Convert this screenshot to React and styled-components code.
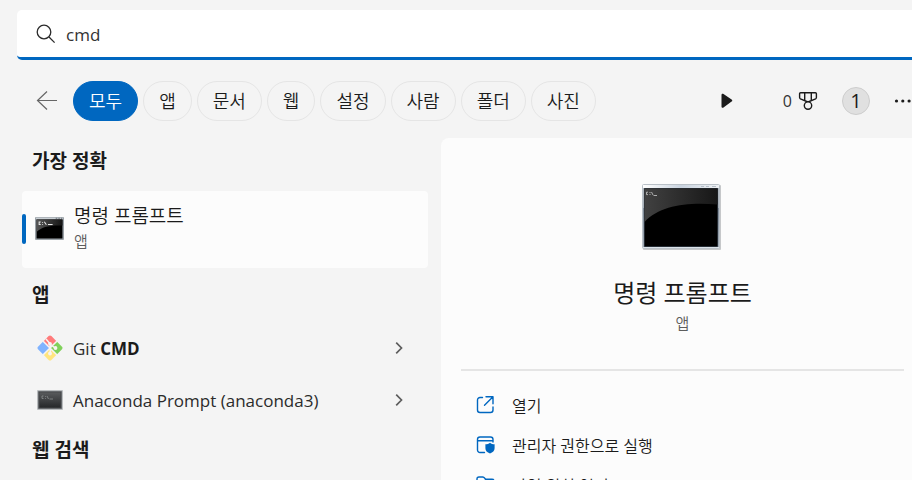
import React from 'react';
import styled, { createGlobalStyle } from 'styled-components';

const GlobalStyle = createGlobalStyle`
  * {
    box-sizing: border-box;
  }

  body {
    margin: 0;
    color: #1b1b1b;
    background: #f4f4f4;
    font-family: 'Open Sans', 'Noto Sans CJK KR', sans-serif;
  }

  button,
  input {
    margin: 0;
    padding: 0;
    border: 0;
    color: inherit;
    background: none;
    font-family: inherit;
  }

  h1,
  h2,
  ul {
    margin: 0;
    padding: 0;
    list-style: none;
  }

  svg {
    display: block;
    flex: none;
  }
`;

const Window = styled.main`
  height: 100vh;
  display: flex;
  flex-direction: column;
  overflow: hidden;
  padding-top: 10px;
`;

const SearchBox = styled.label`
  height: 50px;
  flex: none;
  display: flex;
  align-items: center;
  gap: 10px;
  margin-left: 17px;
  padding-left: 19px;
  border-bottom: 3px solid #0067c0;
  border-radius: 5px 0 0 5px;
  background: #fff;
`;

const SearchInput = styled.input`
  flex: 1;
  min-width: 0;
  height: 100%;
  padding-top: 2px;
  color: #333;
  font-size: 17px;
  outline: 0;
`;

const Toolbar = styled.div`
  height: 78px;
  flex: none;
  display: flex;
  align-items: center;
  padding: 4px 0 0 36px;
`;

const IconButton = styled.button`
  display: flex;
  align-items: center;
  cursor: pointer;
`;

const Tabs = styled.nav`
  display: flex;
  gap: 5px;
  margin-left: 15px;
`;

const Tab = styled.button`
  height: 40px;
  padding: 0 15px 2px;
  border: 1px solid ${(props) => (props.$active ? '#0067c0' : '#e5e5e5')};
  border-radius: 20px;
  color: ${(props) => (props.$active ? '#fff' : '#1b1b1b')};
  background: ${(props) => (props.$active ? '#0067c0' : 'transparent')};
  font-size: 18px;
  font-weight: 350;
  cursor: pointer;
`;

const Tools = styled.div`
  display: flex;
  align-items: center;
  gap: 24px;
  margin-left: auto;
`;

const PlayButton = styled(IconButton)`
  margin-right: 25px;
`;

const Rewards = styled(IconButton)`
  gap: 6px;
  color: #333;
  font-size: 16px;
`;

const Avatar = styled.button`
  width: 28px;
  height: 28px;
  border: 1px solid #cdcdcd;
  border-radius: 50%;
  background: #e0e0e0;
  font-size: 20px;
  line-height: 24px;
`;

const Content = styled.div`
  flex: 1;
  min-height: 0;
  display: flex;
`;

const Results = styled.section`
  width: 441px;
  flex: none;
  padding: 8px 13px 0 22px;
`;

const GroupTitle = styled.h2`
  padding-left: 10px;
  font-size: 19px;
  font-weight: 700;
  line-height: 30px;
`;

const BestMatch = styled.button`
  width: 100%;
  height: 77px;
  display: flex;
  align-items: center;
  margin: 15px 0 12px;
  padding-bottom: 2px;
  border-radius: 4px;
  background: #fcfcfc;
  text-align: left;
  cursor: pointer;
`;

const Marker = styled.span`
  width: 4px;
  height: 30px;
  margin-right: 9px;
  border-radius: 2px;
  background: #0067c0;
`;

const BestText = styled.span`
  display: flex;
  flex-direction: column;
  margin-left: 10px;
  padding-bottom: 2px;
`;

const Name = styled.span`
  font-size: 19px;
  font-weight: 350;
  line-height: 26px;
`;

const Kind = styled.span`
  color: #5d5d5d;
  font-size: 15px;
  font-weight: 350;
  line-height: 24px;
`;

const AppList = styled.ul`
  padding: 12px 0 9px;
`;

const AppRow = styled.button`
  width: 100%;
  height: 52px;
  display: flex;
  align-items: center;
  gap: 10px;
  padding: 0 25px 0 15px;
  color: #2b2b2b;
  font-size: 17px;
  text-align: left;
  cursor: pointer;
`;

const AppName = styled.span`
  flex: 1;

  b {
    color: #1b1b1b;
    font-weight: 700;
  }
`;

const Details = styled.section`
  flex: 1;
  min-width: 0;
  padding: 46px 8px 0 20px;
  border-radius: 8px 0 0 0;
  background: #fcfcfc;
`;

const Hero = styled.header`
  display: flex;
  flex-direction: column;
  align-items: center;
  padding-bottom: 34px;
  border-bottom: 2px solid #e5e5e5;
`;

const HeroTitle = styled.h1`
  margin-top: 23px;
  font-size: 24px;
  font-weight: 400;
  line-height: 36px;
`;

const Actions = styled.ul`
  padding-top: 14px;
`;

const Action = styled.button`
  width: 100%;
  height: 40px;
  display: flex;
  align-items: center;
  gap: 16px;
  padding-left: 15px;
  color: #1b1b1b;
  font-size: 16px;
  font-weight: 350;
  cursor: pointer;
`;

function SearchIcon() {
  return (
    <svg width="20" height="20" viewBox="0 0 20 20" fill="none" stroke="#2b2b2b" strokeWidth="1.3">
      <circle cx="8" cy="8" r="6.8" />
      <path d="M13 13l5.600 5.600" />
    </svg>
  );
}

function BackIcon() {
  return (
    <svg width="22" height="20" viewBox="0 0 22 20" fill="none" stroke="#666" strokeWidth="1.2">
      <path d="M21 9.500H1.500M11 .5L1.500 9.500l9.500 9" />
    </svg>
  );
}

function PlayIcon() {
  return (
    <svg width="14" height="16" viewBox="0 0 14 16" fill="#1b1b1b">
      <path d="M1.500 2c0-1.200 1-1.700 2-1.100l8.100 5.500c.9.6.9 1.600 0 2.200l-8.100 5.800c-1 .6-2 .2-2-1z" />
    </svg>
  );
}

function MedalIcon() {
  return (
    <svg width="20" height="20" viewBox="0 0 20 20" fill="none" stroke="#1b1b1b" strokeWidth="1.4" strokeLinejoin="round">
      <path d="M2.600 1.700h14.800c.6 0 1 .4 1 1v3.800c0 .6-.3 1-.8 1.300L10 11 2.400 7.800c-.5-.3-.8-.7-.8-1.300V2.700c0-.6.4-1 1-1z" />
      <path d="M6.700 1.700v7.600M13.300 1.700v7.600" />
      <circle cx="10" cy="14.600" r="3.700" fill="#f4f4f4" />
    </svg>
  );
}

function MoreIcon() {
  return (
    <svg width="18" height="6" viewBox="0 0 18 6" fill="#1b1b1b">
      <circle cx="2.500" cy="3" r="1.600" />
      <circle cx="8.800" cy="3" r="1.600" />
      <circle cx="15.100" cy="3" r="1.600" />
    </svg>
  );
}

function ChevronIcon() {
  return (
    <svg width="8" height="12" viewBox="0 0 8 12" fill="none" stroke="#5d5d5d" strokeWidth="1.700">
      <path d="M1.200.7L6.500 6l-5.300 5.300" />
    </svg>
  );
}

function ConsoleSmallIcon() {
  return (
    <svg width="29" height="23" viewBox="0 0 28 23" preserveAspectRatio="none">
      <defs>
        <linearGradient id="smallGloss" x1="0" y1="0" x2="1" y2="0">
          <stop offset="0" stopColor="#555" />
          <stop offset="1" stopColor="#151515" />
        </linearGradient>
      </defs>
      <rect width="28" height="23" rx="1" fill="#9ba2a8" />
      <rect x="1" y=".6" width="26" height="1.600" fill="#c9cfd4" />
      <path d="M20 1.200h1.500M22.500 1.200H24M25 1.200h1.300" stroke="#6d747b" />
      <rect x="1.500" y="2.500" width="25" height="19" fill="#000" />
      <path d="M1.500 2.500h25v6C14 8 6 10 1.500 15z" fill="url(#smallGloss)" />
      <path d="M5.500 5H4v2.500h1.500M7.300 5v.8M7.300 7v.8M9 4.800l2 3M12.500 7.500H17" fill="none" stroke="#e8e8e8" />
    </svg>
  );
}

function ConsoleLargeIcon() {
  return (
    <svg width="81" height="68" viewBox="0 0 81 68">
      <defs>
        <linearGradient id="frame" x1="0" y1="0" x2="0" y2="1">
          <stop offset="0" stopColor="#fafbfc" />
          <stop offset=".36" stopColor="#e5eaef" />
          <stop offset=".37" stopColor="#a3aeba" />
          <stop offset="1" stopColor="#dce3ea" />
        </linearGradient>
        <linearGradient id="titleBar" x1="0" y1="0" x2="1" y2="0">
          <stop offset="0" stopColor="#fff" />
          <stop offset=".5" stopColor="#c9d3df" />
          <stop offset="1" stopColor="#eef1f4" />
        </linearGradient>
        <linearGradient id="gloss" x1="0" y1="0" x2="1" y2="0">
          <stop offset="0" stopColor="#414141" />
          <stop offset="1" stopColor="#171717" />
        </linearGradient>
      </defs>
      <rect x="1" y="1" width="78" height="65" rx="1" fill="#c6c8ca" />
      <rect x=".5" y=".5" width="77" height="64" rx="1" fill="url(#frame)" stroke="#b9c0c7" />
      <rect x="1" y="1" width="76" height="3" fill="url(#titleBar)" />
      <path d="M59 2.500h3M64 2.500h3M70 2.500h4" stroke="#b5bec8" />
      <rect x="1.600" y="4" width="74.800" height="59" fill="#4a5868" />
      <rect x="2.500" y="4.500" width="73" height="58" fill="#000" />
      <path d="M2.500 4.500h73V20.500C46 18 18 21 2.500 38z" fill="url(#gloss)" />
      <path d="M6 8.200H4.500v2.400H6M8 8v1M8 10v1M9.500 8l1.500 3M11.500 11.500H15" fill="none" stroke="#ccc" strokeWidth=".8" />
    </svg>
  );
}

function GitIcon() {
  return (
    <svg width="26" height="26" viewBox="0 0 26 26">
      <path d="M13 .5c.6 0 1 .2 1.400.6l5.100 5.100L13 12.600 6.600 6.200l5-5.100c.4-.4.8-.6 1.400-.6z" fill="#ff7b7b" />
      <path d="M19.800 6.500l5.200 5.300c.7.700.7 1.700 0 2.400l-5.200 5.300L13.400 13z" fill="#80d15b" />
      <path d="M13 13.400l6.500 6.400-5.100 5.100c-.8.8-2 .8-2.800 0l-5-5.100z" fill="#ffe57f" />
      <path d="M6.200 6.500l6.400 6.500-6.400 6.500L1 14.200c-.7-.7-.7-1.700 0-2.400z" fill="#80b3ff" />
      <path d="M6.200 6.200L19.800 19.800M19.800 6.200L6.200 19.800M9 4l4.300 5v9M13 9l5 4" fill="none" stroke="#f7f4f3" strokeWidth="1.500" />
      <circle cx="13" cy="8.800" r="1.900" fill="#f7f4f3" />
      <circle cx="18.500" cy="13" r="1.900" fill="#f7f4f3" />
      <circle cx="13" cy="18.500" r="1.900" fill="#f7f4f3" />
    </svg>
  );
}

function AnacondaIcon() {
  return (
    <svg width="26" height="20" viewBox="0 0 26 20">
      <defs>
        <linearGradient id="screen" x1="0" y1="0" x2="0" y2="1">
          <stop offset="0" stopColor="#5a5c5e" />
          <stop offset="1" stopColor="#242628" />
        </linearGradient>
      </defs>
      <rect width="26" height="20" rx="1" fill="#b9bcbe" />
      <rect x="1" y="1" width="24" height="18" fill="#85898c" />
      <rect x="2" y="2" width="22" height="16" fill="url(#screen)" stroke="#46494b" />
      <path d="M6.500 6H5v2.500h1.500M8.500 6v.8M8.500 8v.8M10 6l1.500 3M12.500 9H16" fill="none" stroke="#8c8f91" strokeWidth=".8" />
    </svg>
  );
}

function OpenIcon() {
  return (
    <svg width="20" height="20" viewBox="0 0 20 20" fill="none" stroke="#0067c0" strokeWidth="1.400" strokeLinecap="round" strokeLinejoin="round">
      <path d="M6.500 2.500H4A2.500 2.500 0 0 0 1.500 5v10A2.500 2.500 0 0 0 4 17.500h10.500A2.500 2.500 0 0 0 17 15v-3" />
      <path d="M10 1.800h7v7M17 1.800L8.500 10.300" />
    </svg>
  );
}

function AdminIcon() {
  return (
    <svg width="20" height="20" viewBox="0 0 20 20" fill="none" stroke="#0067c0" strokeWidth="1.400" strokeLinecap="round">
      <path d="M8.500 17.500H4A2.500 2.500 0 0 1 1.500 15V4.500A2.500 2.500 0 0 1 4 2h10.500A2.500 2.500 0 0 1 17 4.500V7M2 5.700h14.700" />
      <path d="M14 7.700c1.300 1.100 2.800 1.500 4.600 1.600v4c0 2.500-1.800 4.200-4.600 5.200-2.900-1-4.600-2.700-4.600-5.200v-4c1.800-.1 3.300-.5 4.600-1.600z" fill="#0067c0" stroke="none" />
    </svg>
  );
}

function FolderIcon() {
  return (
    <svg width="20" height="20" viewBox="0 0 20 20" fill="none" stroke="#0067c0" strokeWidth="1.400" strokeLinejoin="round">
      <path d="M1 15V4a2 2 0 0 1 2-2h3.600c.5 0 1 .2 1.400.6l1.700 1.700H16a2 2 0 0 1 2 2V15a2 2 0 0 1-2 2H3a2 2 0 0 1-2-2z" />
      <path d="M1 7h5.600c.5 0 1-.2 1.400-.6l2-2" />
    </svg>
  );
}

const tabs = ['모두', '앱', '문서', '웹', '설정', '사람', '폴더', '사진'];

const actions = [
  { label: '열기', icon: <OpenIcon /> },
  { label: '관리자 권한으로 실행', icon: <AdminIcon /> },
  { label: '파일 위치 열기', icon: <FolderIcon /> },
];

function App() {
  return (
    <Window>
      <GlobalStyle />
      <SearchBox>
        <SearchIcon />
        <SearchInput type="text" aria-label="cmd" defaultValue="cmd" />
      </SearchBox>

      <Toolbar>
        <IconButton>
          <BackIcon />
        </IconButton>
        <Tabs>
          {tabs.map((tab, index) => (
            <Tab key={tab} $active={index === 0}>
              {tab}
            </Tab>
          ))}
        </Tabs>
        <Tools>
          <PlayButton>
            <PlayIcon />
          </PlayButton>
          <Rewards>
            0
            <MedalIcon />
          </Rewards>
          <Avatar>1</Avatar>
          <IconButton>
            <MoreIcon />
          </IconButton>
        </Tools>
      </Toolbar>

      <Content>
        <Results>
          <GroupTitle>가장 정확</GroupTitle>
          <BestMatch>
            <Marker />
            <ConsoleSmallIcon />
            <BestText>
              <Name>명령 프롬프트</Name>
              <Kind>앱</Kind>
            </BestText>
          </BestMatch>

          <GroupTitle>앱</GroupTitle>
          <AppList>
            <li>
              <AppRow>
                <GitIcon />
                <AppName>
                  Git <b>CMD</b>
                </AppName>
                <ChevronIcon />
              </AppRow>
            </li>
            <li>
              <AppRow>
                <AnacondaIcon />
                <AppName>Anaconda Prompt (anaconda3)</AppName>
                <ChevronIcon />
              </AppRow>
            </li>
          </AppList>

          <GroupTitle>웹 검색</GroupTitle>
        </Results>

        <Details>
          <Hero>
            <ConsoleLargeIcon />
            <HeroTitle>명령 프롬프트</HeroTitle>
            <Kind>앱</Kind>
          </Hero>
          <Actions>
            {actions.map((action) => (
              <li key={action.label}>
                <Action>
                  {action.icon}
                  {action.label}
                </Action>
              </li>
            ))}
          </Actions>
        </Details>
      </Content>
    </Window>
  );
}

export default App;
